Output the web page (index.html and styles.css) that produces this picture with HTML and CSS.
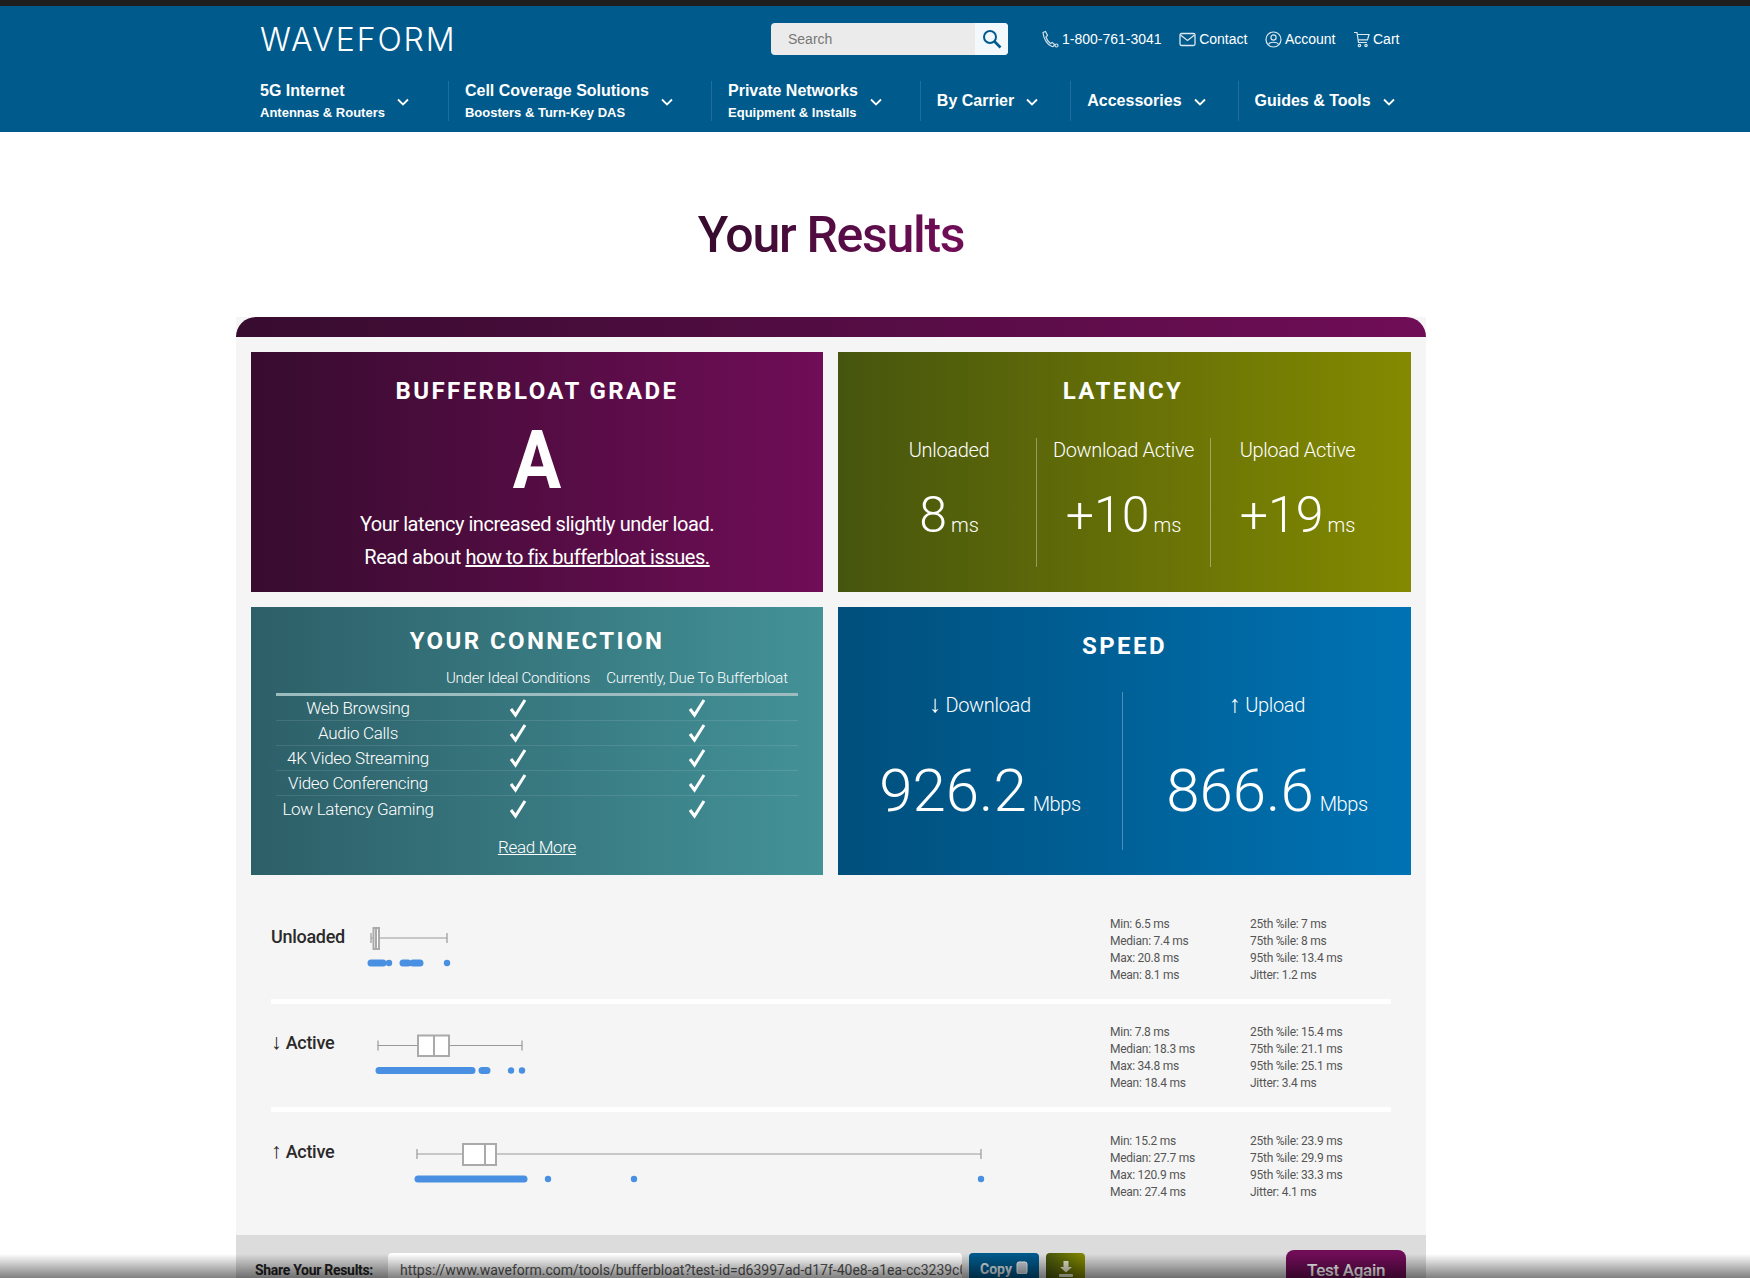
FILE: index.html
```html
<!DOCTYPE html>
<html lang="en">
<head>
    <meta charset="UTF-8">
    <title>Bufferbloat Test Results</title>
    <link rel="stylesheet" href="styles.css">
</head>
<body>
    <div class="topline"></div>
    <header class="site-header">
        <div class="header-top">
            <a class="logo">WAVEFORM</a>
            <div class="search">
                <span class="search-text">Search</span>
                <span class="search-btn">
                    <svg width="20" height="20" viewBox="0 0 20 20" fill="none" stroke="#005a8c" stroke-width="2"><circle cx="8" cy="8" r="6"/><path d="M12.5 12.5 L18.5 18.5" stroke-width="2.6"/></svg>
                </span>
            </div>
            <div class="top-links">
                <span class="top-link">
                    <svg width="18" height="18" viewBox="0 0 18 18" fill="none" stroke="#cfe0ea" stroke-width="1.2"><path d="M2 2.5 L4.5 1.5 L6.5 5.5 L5 7 C5.5 9 7.5 12 9.5 13.5 L11.2 12.4 L13.5 14.5 C13 16 12 16.8 11 16.5 C6.5 15 2.5 9 2 2.5 Z"/><circle cx="15.5" cy="15.5" r="1.5"/></svg>
                    1-800-761-3041
                </span>
                <span class="top-link">
                    <svg width="17" height="15" viewBox="0 0 17 15" fill="none" stroke="#dce8ef" stroke-width="1.3"><rect x="1" y="1.5" width="15" height="12" rx="1.5"/><path d="M1.5 3 L8.5 8.5 L15.5 3"/></svg>
                    Contact
                </span>
                <span class="top-link">
                    <svg width="17" height="17" viewBox="0 0 17 17" fill="none" stroke="#dce8ef" stroke-width="1.2"><circle cx="8.5" cy="8.5" r="7.5"/><circle cx="8.5" cy="6.5" r="2.6"/><path d="M3.5 13.5 C4.5 10.5 12.5 10.5 13.5 13.5"/></svg>
                    Account
                </span>
                <span class="top-link">
                    <svg width="17" height="17" viewBox="0 0 17 17" fill="none" stroke="#dce8ef" stroke-width="1.2"><path d="M1 1.5 H4 L5.5 11.5 H14"/><path d="M4.3 3.5 H16 L14.5 8.8 H5.1"/><circle cx="6.5" cy="14.5" r="1.2"/><circle cx="13" cy="14.5" r="1.2"/></svg>
                    Cart
                </span>
            </div>
        </div>
        <nav class="main-nav">
            <div class="nav-item two-line">
                <div><b>5G Internet</b><small>Antennas &amp; Routers</small></div>
                <svg class="chev" width="12" height="8" viewBox="0 0 12 8" fill="none" stroke="#fff" stroke-width="1.8"><path d="M1 1.5 L6 6.5 L11 1.5"/></svg>
            </div>
            <div class="nav-item two-line">
                <div><b>Cell Coverage Solutions</b><small>Boosters &amp; Turn-Key DAS</small></div>
                <svg class="chev" width="12" height="8" viewBox="0 0 12 8" fill="none" stroke="#fff" stroke-width="1.8"><path d="M1 1.5 L6 6.5 L11 1.5"/></svg>
            </div>
            <div class="nav-item two-line">
                <div><b>Private Networks</b><small>Equipment &amp; Installs</small></div>
                <svg class="chev" width="12" height="8" viewBox="0 0 12 8" fill="none" stroke="#fff" stroke-width="1.8"><path d="M1 1.5 L6 6.5 L11 1.5"/></svg>
            </div>
            <div class="nav-item">
                <b>By Carrier</b>
                <svg class="chev" width="12" height="8" viewBox="0 0 12 8" fill="none" stroke="#fff" stroke-width="1.8"><path d="M1 1.5 L6 6.5 L11 1.5"/></svg>
            </div>
            <div class="nav-item">
                <b>Accessories</b>
                <svg class="chev" width="12" height="8" viewBox="0 0 12 8" fill="none" stroke="#fff" stroke-width="1.8"><path d="M1 1.5 L6 6.5 L11 1.5"/></svg>
            </div>
            <div class="nav-item">
                <b>Guides &amp; Tools</b>
                <svg class="chev" width="12" height="8" viewBox="0 0 12 8" fill="none" stroke="#fff" stroke-width="1.8"><path d="M1 1.5 L6 6.5 L11 1.5"/></svg>
            </div>
        </nav>
    </header>

    <main class="content">
        <h1 class="page-title">Your Results</h1>

        <section class="panel">
            <div class="panel-bar"></div>

            <div class="cards">
                <div class="card grade">
                    <h2 class="card-title">BUFFERBLOAT GRADE</h2>
                    <div class="grade-letter">A</div>
                    <p class="grade-text">Your latency increased slightly under load.</p>
                    <p class="grade-text">Read about <a href="#">how to fix bufferbloat issues.</a></p>
                </div>

                <div class="card latency">
                    <h2 class="card-title">LATENCY</h2>
                    <div class="latency-cols">
                        <div class="stat-col">
                            <div class="stat-label">Unloaded</div>
                            <div class="stat-value">8<span>ms</span></div>
                        </div>
                        <div class="stat-col">
                            <div class="stat-label">Download Active</div>
                            <div class="stat-value">+10<span>ms</span></div>
                        </div>
                        <div class="stat-col">
                            <div class="stat-label">Upload Active</div>
                            <div class="stat-value">+19<span>ms</span></div>
                        </div>
                    </div>
                </div>

                <div class="card connection">
                    <h2 class="card-title">YOUR CONNECTION</h2>
                    <div class="conn-row conn-head">
                        <span></span>
                        <span>Under Ideal Conditions</span>
                        <span>Currently, Due To Bufferbloat</span>
                    </div>
                    <div class="conn-row">
                        <span>Web Browsing</span>
                        <svg width="18" height="20" viewBox="0 0 18 20" fill="none" stroke="#fff" stroke-width="3"><path d="M2 11 L6.5 17 L16 2"/></svg>
                        <svg width="18" height="20" viewBox="0 0 18 20" fill="none" stroke="#fff" stroke-width="3"><path d="M2 11 L6.5 17 L16 2"/></svg>
                    </div>
                    <div class="conn-row">
                        <span>Audio Calls</span>
                        <svg width="18" height="20" viewBox="0 0 18 20" fill="none" stroke="#fff" stroke-width="3"><path d="M2 11 L6.5 17 L16 2"/></svg>
                        <svg width="18" height="20" viewBox="0 0 18 20" fill="none" stroke="#fff" stroke-width="3"><path d="M2 11 L6.5 17 L16 2"/></svg>
                    </div>
                    <div class="conn-row">
                        <span>4K Video Streaming</span>
                        <svg width="18" height="20" viewBox="0 0 18 20" fill="none" stroke="#fff" stroke-width="3"><path d="M2 11 L6.5 17 L16 2"/></svg>
                        <svg width="18" height="20" viewBox="0 0 18 20" fill="none" stroke="#fff" stroke-width="3"><path d="M2 11 L6.5 17 L16 2"/></svg>
                    </div>
                    <div class="conn-row">
                        <span>Video Conferencing</span>
                        <svg width="18" height="20" viewBox="0 0 18 20" fill="none" stroke="#fff" stroke-width="3"><path d="M2 11 L6.5 17 L16 2"/></svg>
                        <svg width="18" height="20" viewBox="0 0 18 20" fill="none" stroke="#fff" stroke-width="3"><path d="M2 11 L6.5 17 L16 2"/></svg>
                    </div>
                    <div class="conn-row">
                        <span>Low Latency Gaming</span>
                        <svg width="18" height="20" viewBox="0 0 18 20" fill="none" stroke="#fff" stroke-width="3"><path d="M2 11 L6.5 17 L16 2"/></svg>
                        <svg width="18" height="20" viewBox="0 0 18 20" fill="none" stroke="#fff" stroke-width="3"><path d="M2 11 L6.5 17 L16 2"/></svg>
                    </div>
                    <a class="read-more" href="#">Read More</a>
                </div>

                <div class="card speed">
                    <h2 class="card-title">SPEED</h2>
                    <div class="speed-cols">
                        <div class="speed-col">
                            <div class="stat-label"><span class="arrow">↓</span> Download</div>
                            <div class="speed-value">926.2<span>Mbps</span></div>
                        </div>
                        <div class="speed-col">
                            <div class="stat-label"><span class="arrow">↑</span> Upload</div>
                            <div class="speed-value">866.6<span>Mbps</span></div>
                        </div>
                    </div>
                </div>
            </div>

            <div class="plot-row">
                <div class="plot-label">Unloaded</div>
                <svg class="plot" width="640" height="68" viewBox="361 915 640 68">
                    <path class="whisker" d="M371 937 H447 M371 932 V942 M447 932 V942"/>
                    <rect class="box" x="373.5" y="927" width="5.5" height="21"/>
                    <path class="whisker-mid" d="M376 927 V948"/>
                    <path class="dots" d="M371 962 H383 M403 962 H408 M413 962 H420"/>
                    <circle class="dot" cx="389" cy="962" r="3.2"/>
                    <circle class="dot" cx="447" cy="962" r="3.2"/>
                </svg>
                <div class="plot-stats">
                    <span>Min: 6.5 ms</span><span>25th %ile: 7 ms</span>
                    <span>Median: 7.4 ms</span><span>75th %ile: 8 ms</span>
                    <span>Max: 20.8 ms</span><span>95th %ile: 13.4 ms</span>
                    <span>Mean: 8.1 ms</span><span>Jitter: 1.2 ms</span>
                </div>
            </div>

            <div class="plot-row">
                <div class="plot-label"><span class="arrow">↓</span> Active</div>
                <svg class="plot" width="640" height="68" viewBox="361 1024 640 68">
                    <path class="whisker" d="M378 1045.5 H418 M449 1045.5 H522 M378 1040.5 V1050.5 M522 1040.5 V1050.5"/>
                    <rect class="box" x="418" y="1035.5" width="31" height="20.5"/>
                    <path class="whisker-mid" d="M434 1035.5 V1056"/>
                    <path class="dots" d="M379 1070.5 H472 M482 1070.5 H487"/>
                    <circle class="dot" cx="511" cy="1070.5" r="3.2"/>
                    <circle class="dot" cx="522" cy="1070.5" r="3.2"/>
                </svg>
                <div class="plot-stats">
                    <span>Min: 7.8 ms</span><span>25th %ile: 15.4 ms</span>
                    <span>Median: 18.3 ms</span><span>75th %ile: 21.1 ms</span>
                    <span>Max: 34.8 ms</span><span>95th %ile: 25.1 ms</span>
                    <span>Mean: 18.4 ms</span><span>Jitter: 3.4 ms</span>
                </div>
            </div>

            <div class="plot-row last">
                <div class="plot-label"><span class="arrow">↑</span> Active</div>
                <svg class="plot" width="640" height="68" viewBox="361 1133 640 68">
                    <path class="whisker" d="M417 1154 H463 M496 1154 H981 M417 1149 V1159 M981 1149 V1159"/>
                    <rect class="box" x="463" y="1144" width="33" height="21"/>
                    <path class="whisker-mid" d="M485 1144 V1165"/>
                    <path class="dots" d="M418 1179 H524"/>
                    <circle class="dot" cx="548" cy="1179" r="3.2"/>
                    <circle class="dot" cx="634" cy="1179" r="3.2"/>
                    <circle class="dot" cx="981" cy="1179" r="3.2"/>
                </svg>
                <div class="plot-stats">
                    <span>Min: 15.2 ms</span><span>25th %ile: 23.9 ms</span>
                    <span>Median: 27.7 ms</span><span>75th %ile: 29.9 ms</span>
                    <span>Max: 120.9 ms</span><span>95th %ile: 33.3 ms</span>
                    <span>Mean: 27.4 ms</span><span>Jitter: 4.1 ms</span>
                </div>
            </div>

            <div class="share-bar">
                <span class="share-label">Share Your Results:</span>
                <div class="share-input">https://www.waveform.com/tools/bufferbloat?test-id=d63997ad-d17f-40e8-a1ea-cc3239c0</div>
                <span class="btn-copy">Copy
                    <svg width="12" height="13" viewBox="0 0 12 13"><rect x="1" y="1" width="10" height="12" rx="2" fill="#c9d3da" stroke="#fff"/></svg>
                </span>
                <span class="btn-save">
                    <svg width="16" height="16" viewBox="0 0 16 16" fill="#e8edd0"><path d="M5.5 0 H10.5 V6 H14 L8 11.5 L2 6 H5.5 Z"/><rect x="1" y="13" width="14" height="3" rx="1"/></svg>
                </span>
                <span class="btn-again">Test Again</span>
            </div>
        </section>
    </main>

    <div class="bottom-fade"></div>
</body>
</html>
```

FILE: styles.css
```css
html, body {
    margin: 0;
    height: 100%;
    overflow: hidden;
}
body {
    background-color: #fff;
    font-family: Roboto, "Noto Sans", sans-serif;
    color: #222;
}
h1, h2, p {
    margin: 0;
}

.topline {
    height: 6px;
    background-color: #1e1e1e;
}
.site-header {
    height: 126px;
    box-sizing: border-box;
    padding-left: 260px;
    background-color: #005a8c;
    color: #fff;
    font-family: "Liberation Sans", Arial, sans-serif;
}
.header-top {
    display: flex;
    align-items: center;
    height: 32px;
    padding-top: 17px;
}
.logo {
    width: 511px;
    font-family: Inter, sans-serif;
    font-size: 32px;
    font-weight: 300;
    letter-spacing: 1.9px;
}
.search {
    display: flex;
    width: 237px;
    height: 32px;
    border-radius: 4px;
    overflow: hidden;
    background-color: #ebebeb;
}
.search-text {
    flex: 1;
    padding-left: 17px;
    font-size: 14px;
    line-height: 32px;
    color: #777;
}
.search-btn {
    display: flex;
    align-items: center;
    justify-content: center;
    width: 33px;
    background-color: #f3f8fc;
}
.top-links {
    display: flex;
    margin-left: 33px;
    gap: 17.5px;
    font-size: 14px;
}
.top-link {
    display: flex;
    align-items: center;
    gap: 3px;
}

.main-nav {
    display: flex;
    margin-top: 26px;
}
.nav-item {
    display: flex;
    align-items: center;
    height: 40px;
    padding: 0 32px 0 16px;
    border-left: 1px solid #1f6f9c;
    font-size: 16px;
}
.nav-item b {
    display: block;
}
.nav-item small {
    display: block;
    margin-top: 5px;
    font-size: 13px;
    font-weight: bold;
}
.nav-item.two-line {
    padding-right: 38px;
}
.nav-item.two-line:first-child {
    padding-left: 0;
    padding-right: 39px;
    border-left: 0;
}
.chev {
    margin-left: 12px;
    margin-top: 1px;
}

.content {
    width: 1190px;
    margin-left: 236px;
}
.page-title {
    margin-top: 73px;
    margin-bottom: 52px;
    height: 60px;
    font-size: 50px;
    font-weight: 500;
    line-height: 60px;
    letter-spacing: -1.3px;
    text-align: center;
    background: linear-gradient(90deg, #370c2f 40%, #700d57 60%);
    -webkit-background-clip: text;
    background-clip: text;
    color: transparent;
}

.panel {
    background-color: #f5f5f5;
}
.panel-bar {
    height: 20px;
    border-radius: 20px 20px 0 0;
    background: linear-gradient(90deg, #370c2f, #700d57);
}
.cards {
    display: grid;
    grid-template-columns: 572px 573px;
    grid-template-rows: 240px 268px;
    gap: 15px;
    padding: 15px 15px 21px;
}
.card {
    box-sizing: border-box;
    color: #fff;
    text-align: center;
}
.card-title {
    font-size: 24px;
    font-weight: 700;
    line-height: 30px;
    letter-spacing: 2.4px;
}
.grade {
    padding-top: 24px;
    background: linear-gradient(90deg, #370c2f, #700d57);
}
.grade-letter {
    margin-top: 14px;
    font-size: 82px;
    font-weight: 700;
    line-height: 80px;
    transform: scaleX(0.88);
}
.grade-letter + .grade-text {
    margin-top: 8px;
}
.grade-text {
    font-size: 20px;
    line-height: 33px;
    letter-spacing: -0.45px;
}
.grade-text a {
    color: #fff;
}

.latency {
    padding: 24px 27px 0 24px;
    background: linear-gradient(90deg, #46550e, #848a00);
}
.latency-cols {
    display: grid;
    grid-template-columns: repeat(3, 1fr);
    margin-top: 32px;
}
.stat-col {
    height: 129px;
    border-left: 1px solid rgba(255, 255, 255, 0.35);
}
.stat-col:first-child {
    border-left: 0;
}
.stat-label {
    font-size: 20px;
    font-weight: 300;
    line-height: 24px;
    letter-spacing: -0.35px;
}
.arrow {
    font-family: "Liberation Sans", Arial, sans-serif;
    font-size: 1.2em;
    line-height: 1;
}
.stat-value {
    margin-top: 23px;
    font-size: 50px;
    font-weight: 300;
    line-height: 60px;
}
.stat-value span {
    margin-left: 4px;
    font-size: 20px;
}

.connection {
    padding: 19px 25px 0;
    background: linear-gradient(90deg, #2d5f68, #439298);
}
.connection .card-title {
    margin-bottom: 12px;
}
.conn-row {
    display: grid;
    grid-template-columns: 164px 156px 202px;
    align-items: center;
    justify-items: center;
    height: 25px;
    box-sizing: border-box;
    border-bottom: 1px solid rgba(255, 255, 255, 0.1);
    font-size: 17px;
    font-weight: 300;
    letter-spacing: -0.3px;
}
.conn-row:last-of-type {
    border-bottom: 0;
}
.conn-head {
    height: 28px;
    padding-bottom: 5px;
    border-bottom: 3px solid #9dbcc0;
    font-size: 15px;
    letter-spacing: -0.2px;
}
.read-more {
    display: block;
    margin-top: 15px;
    font-size: 17px;
    font-weight: 300;
    line-height: 22px;
    letter-spacing: -0.3px;
    color: #fff;
}

.speed {
    padding-top: 24px;
    background: linear-gradient(90deg, #004f7c, #0073b4);
}
.speed-cols {
    display: grid;
    grid-template-columns: 284px 1fr;
    margin-top: 31px;
}
.speed-col {
    height: 158px;
    border-left: 1px solid rgba(255, 255, 255, 0.3);
}
.speed-col:first-child {
    border-left: 0;
}
.speed-value {
    margin-top: 39px;
    font-size: 60px;
    font-weight: 300;
    line-height: 70px;
}
.speed-value span {
    margin-left: 6px;
    font-size: 20px;
    letter-spacing: -0.4px;
}

.plot-row {
    display: flex;
    margin: 20px 35px 0;
    padding-bottom: 15px;
    border-bottom: 5px solid #fff;
}
.plot-row.last {
    margin-top: 21px;
    padding-bottom: 34px;
    border-bottom: 0;
}
.plot-label {
    width: 90px;
    margin-top: 9px;
    font-size: 18px;
    font-weight: 500;
    line-height: 24px;
    letter-spacing: -0.3px;
    color: #2a2a2a;
}
.plot-row + .plot-row .plot-label {
    margin-top: 7px;
}
.plot {
    flex: none;
}
.whisker, .whisker-mid {
    fill: none;
    stroke: #999;
    stroke-width: 1.2;
}
.whisker-mid {
    stroke-width: 2;
    stroke: #aaa;
}
.box {
    fill: #fff;
    stroke: #aaa;
    stroke-width: 2;
}
.dots {
    fill: none;
    stroke: #4a90e2;
    stroke-width: 7;
    stroke-linecap: round;
}
.dot {
    fill: #4a90e2;
}
.plot-stats {
    display: grid;
    grid-template-columns: 140px 140px;
    margin-left: 109px;
    font-size: 12px;
    line-height: 17px;
    letter-spacing: -0.25px;
    color: #555;
}

.share-bar {
    display: flex;
    align-items: flex-start;
    height: 43px;
    box-sizing: border-box;
    padding: 15px 20px 0 19px;
    background-color: #dcdcdc;
}
.share-label {
    width: 133px;
    margin-top: 12px;
    font-size: 14px;
    font-weight: 700;
    letter-spacing: -0.3px;
    white-space: nowrap;
}
.share-input {
    box-sizing: border-box;
    width: 574px;
    height: 28px;
    margin-top: 3px;
    padding: 9px 12px 0;
    overflow: hidden;
    border-radius: 4px 4px 0 0;
    background-color: #fff;
    font-size: 14px;
    white-space: nowrap;
    color: #555;
}
.btn-copy, .btn-save {
    display: flex;
    align-items: flex-start;
    justify-content: center;
    gap: 4px;
    box-sizing: border-box;
    height: 28px;
    margin-top: 3px;
    padding-top: 8px;
    border-radius: 4px 4px 0 0;
    color: #dfe8ee;
    font-size: 14px;
    font-weight: 700;
}
.btn-copy {
    width: 70px;
    margin-left: 7px;
    background-color: #005a8c;
}
.btn-save {
    width: 39px;
    margin-left: 7px;
    background: linear-gradient(90deg, #46550e, #848a00);
}
.btn-again {
    width: 120px;
    height: 28px;
    margin-left: auto;
    padding-top: 10px;
    box-sizing: border-box;
    border-radius: 8px 8px 0 0;
    background-color: #700d57;
    color: #fff;
    font-size: 17px;
    line-height: 20px;
    font-weight: 500;
    letter-spacing: -0.3px;
    text-align: center;
}

.bottom-fade {
    position: fixed;
    left: 0;
    right: 0;
    bottom: 0;
    height: 24px;
    background: linear-gradient(180deg, rgba(0, 0, 0, 0), rgba(0, 0, 0, 0.5));
}
```
